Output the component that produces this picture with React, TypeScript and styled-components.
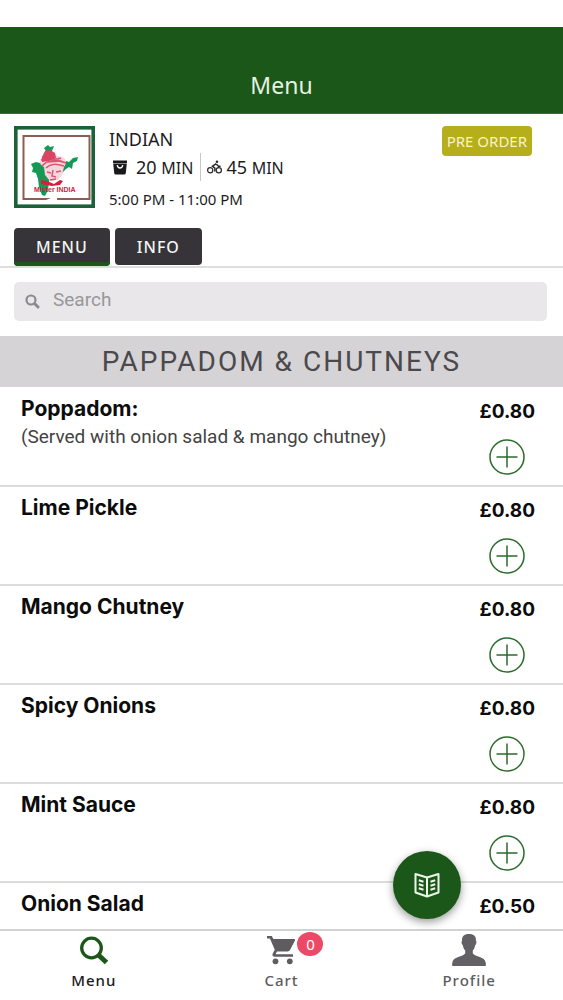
import React from 'react';
import styled, { createGlobalStyle } from 'styled-components';

const GREEN = '#1b5718';

const GlobalStyle = createGlobalStyle`
  * { box-sizing: border-box; }
  body { margin: 0; background: #fff; color: #1c1c1e; font-family: 'Noto Sans', sans-serif; }
  button, input { font: inherit; border: 0; margin: 0; padding: 0; }
  button { cursor: pointer; }
  h1, h2, h3, p, ul { margin: 0; padding: 0; font-weight: 400; }
  svg { display: block; }
`;

const Screen = styled.div`
  height: 100vh;
  display: flex;
  flex-direction: column;
  padding-top: 27px;
  overflow: hidden;
`;

const Header = styled.header`
  flex: none;
  height: 87px;
  padding-bottom: 12px;
  display: flex;
  align-items: flex-end;
  justify-content: center;
  background: ${GREEN};
  border-bottom: 1px solid #2d6480;
`;

const Title = styled.h1`
  color: #e6f2e2;
  font-size: 23px;
  line-height: 32px;
`;

const Restaurant = styled.section`
  flex: none;
  display: flex;
  align-items: flex-start;
  padding: 12px 31px 0 14px;
  height: 114px;
`;

const Details = styled.div`
  flex: 1;
  padding-left: 14px;
`;

const Name = styled.h2`
  font-size: 18px;
  line-height: 27px;
`;

const Times = styled.div`
  display: flex;
  align-items: center;
  height: 28px;
`;

const Time = styled.span<{ $divided?: boolean }>`
  display: flex;
  align-items: center;
  gap: ${p => (p.$divided ? 4 : 8)}px;
  height: 28px;
  padding-left: ${p => (p.$divided ? 6 : 3)}px;
  margin-left: ${p => (p.$divided ? 7 : 0)}px;
  border-left: ${p => (p.$divided ? '1px solid #c8c8c8' : '0')};
  font-size: 18px;
  line-height: 28px;
  white-space: pre;
  small { font-size: 16px; }
`;

const Hours = styled.p`
  font-size: 15px;
  line-height: 20px;
  padding-top: 8px;
`;

const PreOrder = styled.button`
  height: 30px;
  padding: 0 5px;
  border-radius: 4px;
  background: #b7ae1c;
  color: #f7f3c4;
  font-size: 15px;
`;

const Tabs = styled.nav`
  flex: none;
  display: flex;
  gap: 5px;
  padding-left: 14px;
  height: 40px;
  border-bottom: 2px solid #dedede;
`;

const Tab = styled.button<{ $active?: boolean }>`
  height: ${p => (p.$active ? 38 : 37)}px;
  padding: 0 22px;
  border-radius: 4px;
  background: #363438;
  box-shadow: ${p => (p.$active ? `inset 0 -4px ${GREEN}` : 'none')};
  color: #f4f4f4;
  font-size: 16px;
  font-weight: 500;
  letter-spacing: 1px;
`;

const SearchBox = styled.label`
  flex: none;
  display: flex;
  align-items: center;
  gap: 13px;
  height: 39px;
  margin: 14px 16px 15px 14px;
  padding: 0 11px;
  border-radius: 5px;
  background: #e9e7e9;
`;

const SearchInput = styled.input`
  flex: 1;
  min-width: 0;
  height: 35px;
  margin-bottom: 4px;
  background: transparent;
  outline: none;
  font-family: Roboto, sans-serif;
  font-size: 19px;
  &::placeholder { color: #98979a; opacity: 1; }
`;

const Category = styled.h2`
  flex: none;
  height: 51px;
  background: #d5d3d6;
  color: #4b494c;
  font-family: Roboto, sans-serif;
  font-size: 28px;
  line-height: 52px;
  letter-spacing: 2px;
  text-align: center;
`;

const List = styled.ul`
  flex: 1;
  min-height: 0;
  padding-top: 1px;
  overflow: hidden;
  list-style: none;
`;

const Item = styled.li`
  display: flex;
  justify-content: space-between;
  min-height: 99px;
  padding: 7px 28px 0 21px;
  border-bottom: 2px solid #dcdcdc;
`;

const ItemName = styled.h3`
  color: #0c0c0c;
  font-family: Inter, sans-serif;
  font-size: 21px;
  font-weight: 700;
  line-height: 28px;
`;

const Description = styled.p`
  color: #434343;
  font-family: Roboto, sans-serif;
  font-size: 19px;
  line-height: 28px;
`;

const Purchase = styled.div`
  display: flex;
  flex-direction: column;
  align-items: center;
  gap: 13px;
  padding-top: 3px;
`;

const Price = styled.span`
  color: #0c0c0c;
  font-family: Inter, sans-serif;
  font-size: 19px;
  font-weight: 700;
  line-height: 28px;
`;

const AddButton = styled.button`
  width: 36px;
  height: 36px;
  border-radius: 50%;
  background: transparent;
`;

const BottomBar = styled.nav`
  flex: none;
  position: relative;
  height: 71px;
  display: grid;
  grid-template-columns: repeat(3, 1fr);
  border-top: 2px solid #d2d2d2;
  background: #fff;
`;

const Destination = styled.a<{ $active?: boolean }>`
  display: flex;
  flex-direction: column;
  align-items: center;
  gap: 2px;
  padding-top: 3px;
  color: ${p => (p.$active ? '#1c1c1e' : '#5e5c60')};
  font-size: 15px;
  font-weight: 500;
  line-height: 24px;
  letter-spacing: 1px;
  text-decoration: none;
`;

const IconSlot = styled.span`
  position: relative;
  height: 32px;
`;

const Badge = styled.span`
  position: absolute;
  top: -2px;
  left: 31px;
  width: 26px;
  height: 24px;
  border-radius: 50%;
  background: #ec4867;
  color: #fff;
  font-size: 15px;
  font-weight: 400;
  letter-spacing: 0;
  text-align: center;
`;

const BrowseButton = styled.button`
  position: absolute;
  right: 102px;
  bottom: 81px;
  width: 68px;
  height: 68px;
  border-radius: 50%;
  background: ${GREEN};
  display: flex;
  align-items: center;
  justify-content: center;
  box-shadow: 0 3px 8px rgba(0, 0, 0, 0.4);
`;

const Logo = () => (
  <svg width="81" height="82" viewBox="0 0 81 82" role="img" aria-label="Restaurant logo">
    <rect x="1.8" y="1.8" width="77.4" height="78.4" fill="#fff" stroke="#1d6139" strokeWidth="3.6" />
    <rect x="9.5" y="10" width="66" height="63" fill="#fff" stroke="#8b5f50" strokeWidth="2" />
    <path d="M30 22l4-3 2 2 4-1-2 5 1 5-4 5-2 6 3 8-1 7-1 8-3 6-3-1-3-8-1-8-2-6-4-1 1-4-2-4 5-2 4 1 4-6 3-4z" fill="#149956" />
    <path d="M45 41l7-6 3 1 4-4 5-1-1 4-4 2-1 6-3-2-3 2-3 3-4 5z" fill="#149956" />
    <path d="M27 33c0-3 3-3 4-6 2-3 8-3 10 0 1 3 3 3 7 4 5 2 5 6 2 10l-2 8-4 5-8 1-5-6-1-8c-4-2-5-5-3-8z" fill="#f6d6dc" />
    <path d="M27 34c7-3 14 1 20-2M28 40c5-6 14-7 24-3M32 42c5-5 11-4 18-2M33 36l15-1M33 46l4 1M42 46l5-1M39 44l-1 6 4 1M36 54l6-1" fill="none" stroke="#dc5472" strokeWidth="1.500" />
    <path d="M28 31l3-6 5-1 5 3 1 5-7 3-7 1z" fill="#d94463" />
    <path d="M27 54l6 1 7 3 6-4 3 1-3 4-8 1-11-2z" fill="#d2213f" />
    <text x="20" y="66" fontFamily="Liberation Sans, sans-serif" fontSize="7" fontWeight="700" fill="#c82643">Mister INDIA</text>
    <path d="M32 74l5-2h6v3H32z" fill="#fff" />
  </svg>
);

const BagIcon = () => (
  <svg width="16" height="16" viewBox="0 0 16 16" aria-hidden="true">
    <path d="M1 1.500h14v2.500H1z" fill="#19191b" />
    <path fillRule="evenodd" d="M1.200 4.500h13.600l-1 9.500q-.2 1.500-1.600 1.500H3.800q-1.400 0-1.600-1.500zM4.700 6c0 5 6.600 5 6.600 0H10c0 3-4 3-4 0z" fill="#19191b" />
  </svg>
);

const BikeIcon = () => (
  <svg width="15" height="14" viewBox="0 0 15 14" fill="none" stroke="#29292b" strokeWidth="1.200" aria-hidden="true">
    <circle cx="3.200" cy="10.200" r="2.600" />
    <circle cx="11.800" cy="10.200" r="2.600" />
    <path d="M9.500 4.200l2 2h2M9.300 3.700L5.400 6.300l2.500 1.900v3.300" strokeWidth="1.500" />
    <circle cx="10" cy="1.800" r="1.300" fill="#29292b" stroke="none" />
  </svg>
);

const FieldSearchIcon = () => (
  <svg width="15" height="15" viewBox="0 0 15 15" fill="none" stroke="#8c8a8e" aria-hidden="true">
    <circle cx="6" cy="6" r="4.500" strokeWidth="2.200" />
    <path d="M9.800 9.800L13 13" strokeWidth="3" strokeLinecap="round" />
  </svg>
);

const PlusIcon = () => (
  <svg width="36" height="36" viewBox="0 0 36 36" fill="none" stroke="#2b6b2b" strokeWidth="1.500" aria-hidden="true">
    <circle cx="18" cy="18" r="17" />
    <path d="M18 7.500v21M7.500 18h21" />
  </svg>
);

const BookIcon = () => (
  <svg width="26" height="26" viewBox="0 0 26 26" fill="none" stroke="#ecf7e9" strokeWidth="2" aria-hidden="true">
    <path d="M1.500 2L13 5.500 24.500 2v18.500L13 24.500 1.500 20.500zM13 5.500v19" strokeLinejoin="round" />
    <path d="M4.800 8.300l4.700 1.500M4.800 12.300l4.700 1.500M4.800 16.300l4.700 1.500M21.200 8.300l-4.700 1.500M21.200 12.300l-4.700 1.500M21.200 16.300l-4.700 1.500" />
  </svg>
);

const MenuIcon = () => (
  <svg width="30" height="32" viewBox="0 0 30 32" fill="none" stroke={GREEN} aria-hidden="true">
    <circle cx="12.500" cy="14" r="9.800" strokeWidth="3.300" />
    <path d="M19.500 21l8 7.500" strokeWidth="5" />
  </svg>
);

const CartIcon = () => (
  <svg width="30" height="32" viewBox="0 0 30 32" fill="#5f5c60" aria-hidden="true">
    <path d="M1 2h4.800l1.500 3H28q1.700 0 1 1.600l-5 9.400q-.7 1.400-2.400 1.400H11l-1.500 2.900H27v2.500H9q-3.600-.2-2.200-3.300l2-3.700L3.900 4.500H1z" />
    <circle cx="9.500" cy="27.300" r="2.900" />
    <circle cx="23.800" cy="27.300" r="2.900" />
  </svg>
);

const ProfileIcon = () => (
  <svg width="34" height="32" viewBox="0 0 34 32" fill="#626064" aria-hidden="true">
    <path d="M17 0c5 0 7.400 2.500 6.900 7 .9.300.9 2.400-.8 4.500-.4 2.300-1 3.600-2.300 4.900v3.200c2.100 3.400 12.200 2.700 13 9.400v3H.2v-3c.8-6.700 10.900-6 13-9.400v-3.200c-1.300-1.300-1.900-2.600-2.300-4.900-1.700-2.100-1.700-4.200-.8-4.500C9.600 2.500 12 0 17 0z" />
  </svg>
);

const items = [
  { name: 'Poppadom:', note: '(Served with onion salad & mango chutney)', price: '£0.80' },
  { name: 'Lime Pickle', price: '£0.80' },
  { name: 'Mango Chutney', price: '£0.80' },
  { name: 'Spicy Onions', price: '£0.80' },
  { name: 'Mint Sauce', price: '£0.80' },
  { name: 'Onion Salad', price: '£0.50' },
];

export default function App() {
  return (
    <>
      <GlobalStyle />
      <Screen>
        <Header><Title>Menu</Title></Header>
        <Restaurant>
          <Logo />
          <Details>
            <Name>INDIAN</Name>
            <Times>
              <Time><BagIcon /><span>20 <small>MIN</small></span></Time>
              <Time $divided><BikeIcon /><span>45 <small>MIN</small></span></Time>
            </Times>
            <Hours>5:00 PM - 11:00 PM</Hours>
          </Details>
          <PreOrder>PRE ORDER</PreOrder>
        </Restaurant>
        <Tabs>
          <Tab $active>MENU</Tab>
          <Tab>INFO</Tab>
        </Tabs>
        <SearchBox>
          <FieldSearchIcon />
          <SearchInput type="search" placeholder="Search" aria-label="Search" />
        </SearchBox>
        <Category>PAPPADOM &amp; CHUTNEYS</Category>
        <List>
          {items.map(item => (
            <Item key={item.name}>
              <div>
                <ItemName>{item.name}</ItemName>
                {item.note && <Description>{item.note}</Description>}
              </div>
              <Purchase>
                <Price>{item.price}</Price>
                <AddButton aria-label={`Add ${item.name}`}><PlusIcon /></AddButton>
              </Purchase>
            </Item>
          ))}
        </List>
        <BottomBar>
          <BrowseButton aria-label="Browse categories"><BookIcon /></BrowseButton>
          <Destination href="#menu" $active><IconSlot><MenuIcon /></IconSlot>Menu</Destination>
          <Destination href="#cart"><IconSlot><CartIcon /><Badge>0</Badge></IconSlot>Cart</Destination>
          <Destination href="#profile"><IconSlot><ProfileIcon /></IconSlot>Profile</Destination>
        </BottomBar>
      </Screen>
    </>
  );
}
